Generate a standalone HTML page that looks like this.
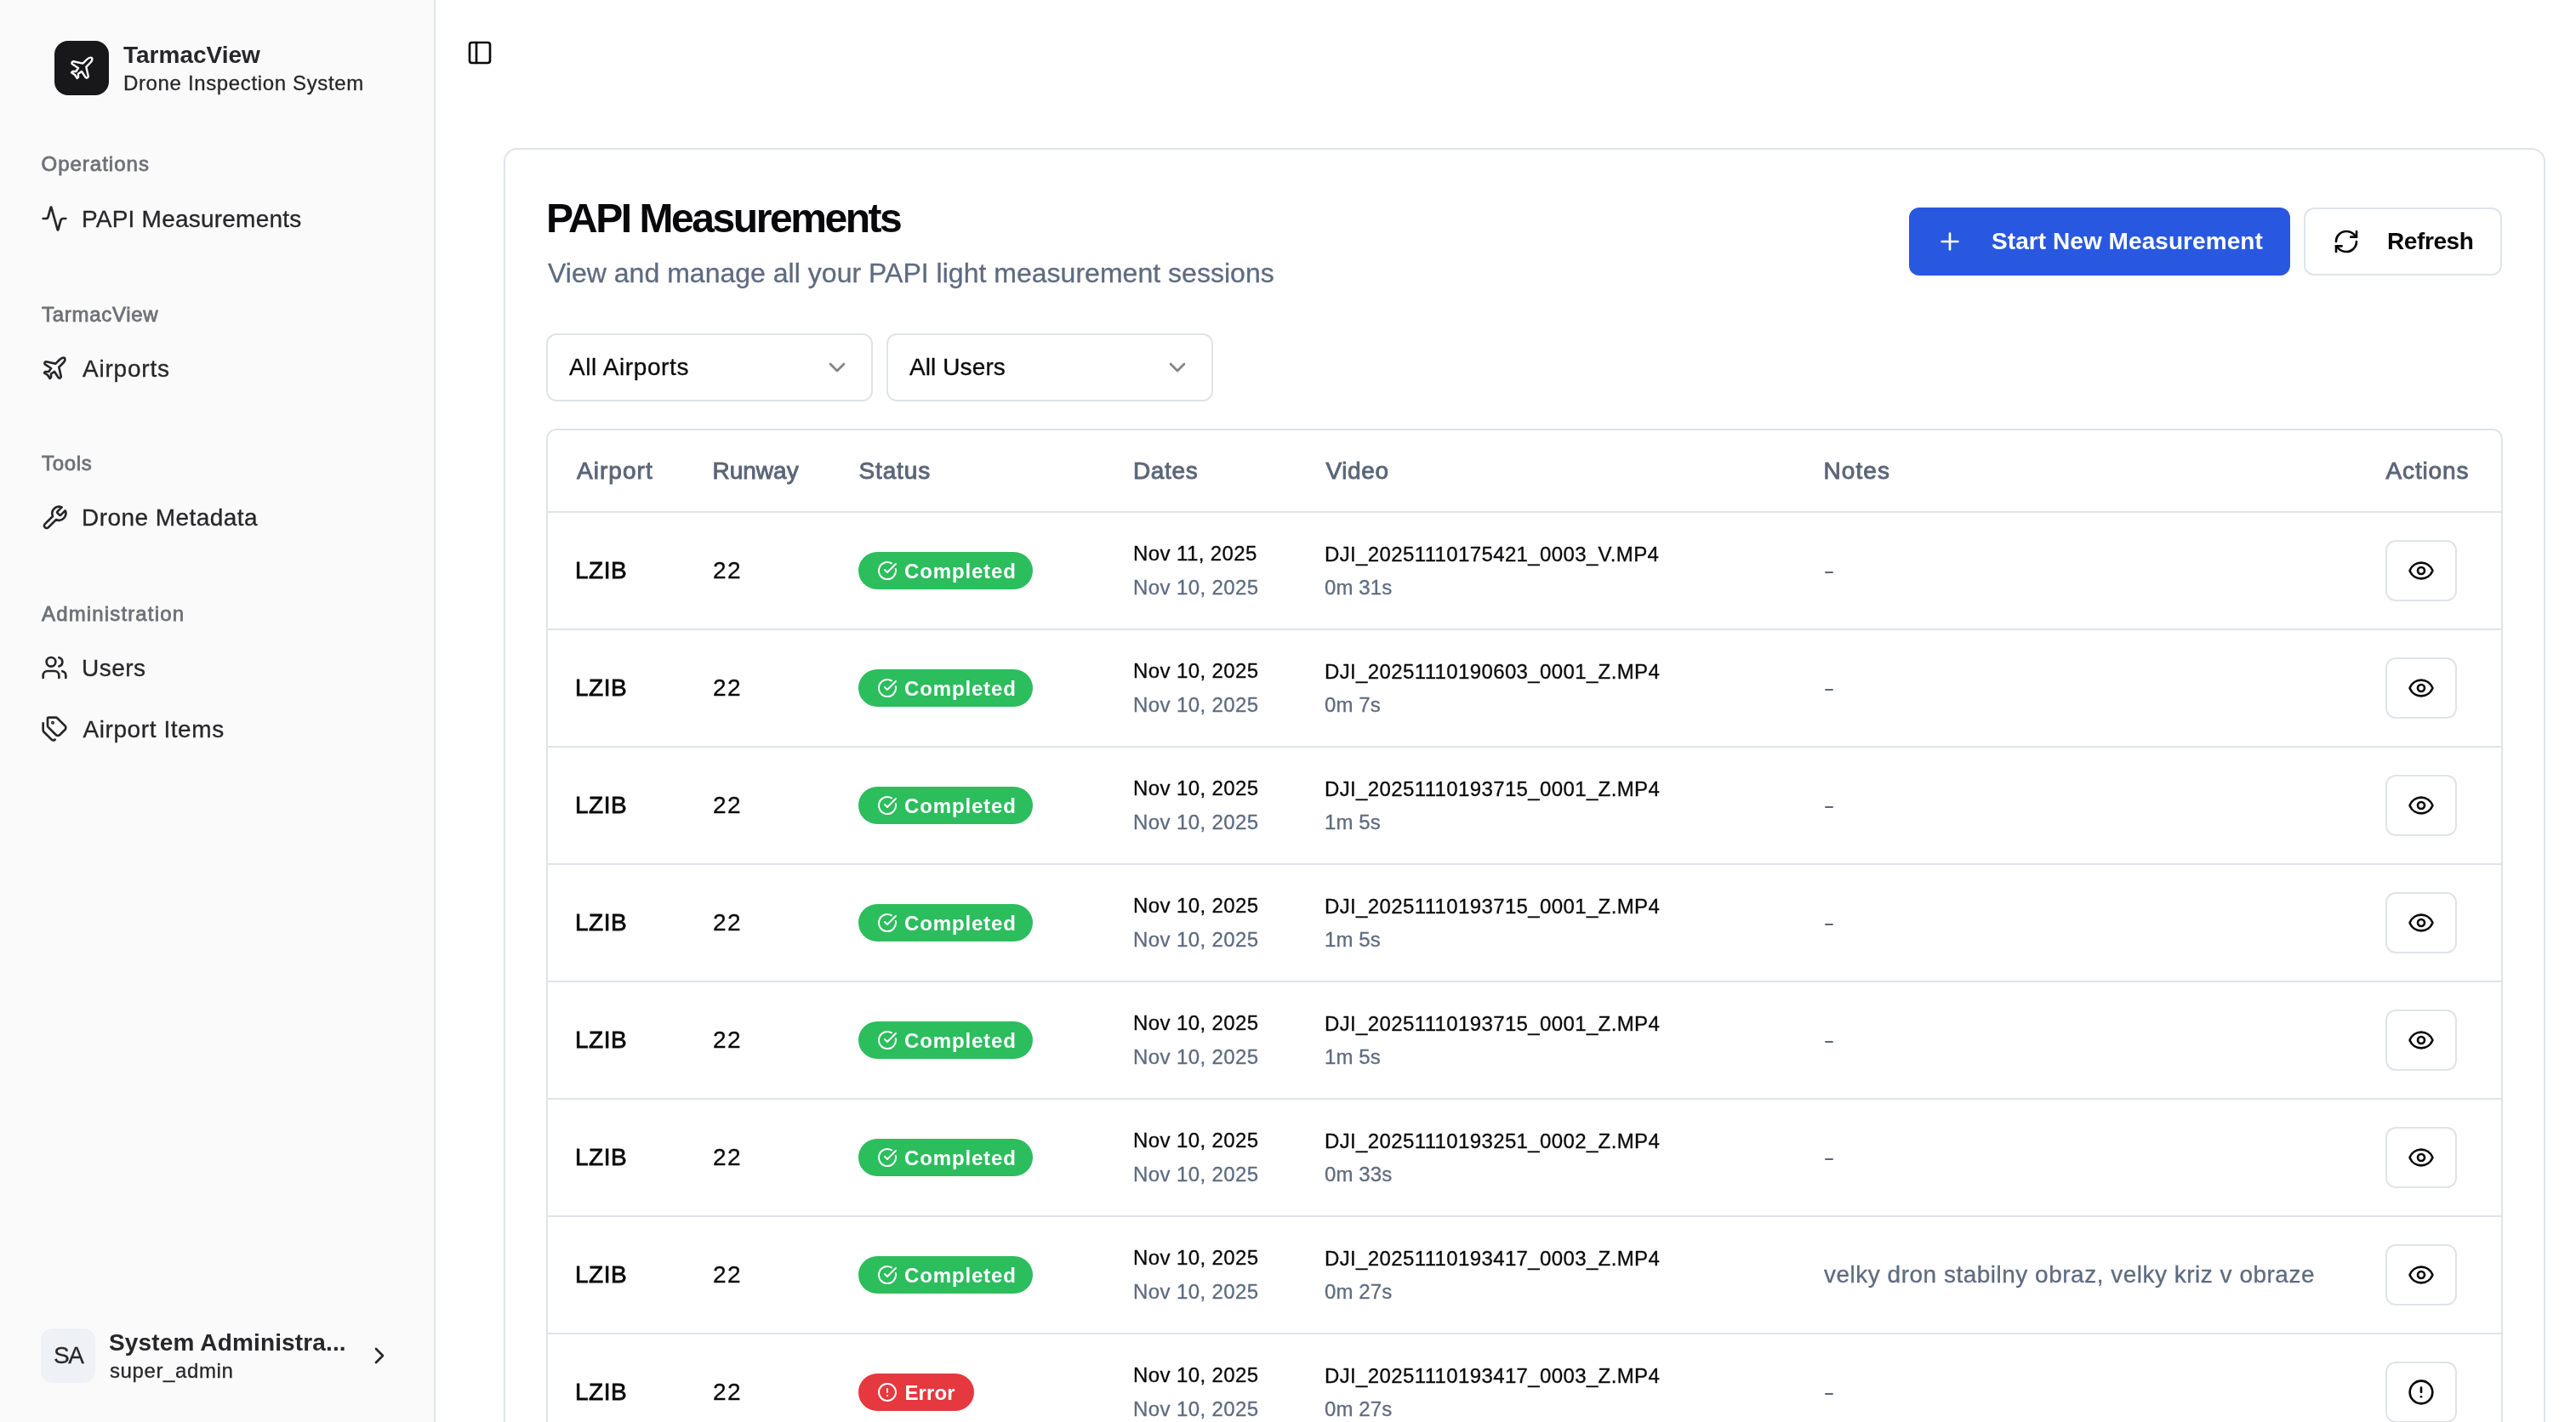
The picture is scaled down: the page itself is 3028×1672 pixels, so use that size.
<!DOCTYPE html>
<html><head><meta charset="utf-8"><title>PAPI Measurements</title>
<style>
html,body{margin:0;padding:0;width:3028px;height:1672px;overflow:hidden;background:#fff;}
body{position:relative;font-family:"Liberation Sans", sans-serif;}
.t{position:absolute;white-space:pre;}
#root{position:absolute;left:0;top:0;width:3028px;height:1672px;will-change:transform;}
svg{display:block;}
@media (max-width:2000px){html{zoom:0.5;}}
</style></head><body><div id="root">
<div style="position:absolute;left:0px;top:0px;width:512px;height:1672px;box-sizing:border-box;background:#fafafa;border-right:2px solid #e0e3e9;"></div>
<div style="position:absolute;left:64px;top:48px;width:64px;height:64px;box-sizing:border-box;background:#18181b;border-radius:16px;"></div>
<svg style="position:absolute;left:80px;top:64px;" width="32" height="32" viewBox="0 0 24 24" fill="none" stroke="#fafafa" stroke-width="1.8" stroke-linecap="round" stroke-linejoin="round"><path d="M17.8 19.2 16 11l3.5-3.5C21 6 21.5 4 21 3c-1-.5-3 0-4.5 1.5L13 8 4.8 6.2c-.5-.1-.9.1-1.1.5l-.3.5c-.2.5-.1 1 .3 1.3L9 12l-2 3H4l-1 1 3 2 2 3 1-1v-3l3-2 3.5 5.3c.3.4.8.5 1.3.3l.5-.2c.4-.3.6-.7.5-1.2z"/></svg>
<div class="t" style="left:145.0px;top:50.59px;font-size:28px;line-height:28px;font-weight:700;color:#27272a;letter-spacing:0px;">TarmacView</div>
<div class="t" style="left:145.0px;top:85.68px;font-size:24px;line-height:24px;font-weight:400;color:#27272a;letter-spacing:0.64px;-webkit-text-stroke:0.3px #27272a;">Drone Inspection System</div>
<div class="t" style="left:48.5px;top:181.48px;font-size:24px;line-height:24px;font-weight:400;color:#6f7178;letter-spacing:1.0px;-webkit-text-stroke:0.8px #6f7178;">Operations</div>
<svg style="position:absolute;left:48px;top:241px;" width="32" height="32" viewBox="0 0 24 24" fill="none" stroke="#27272a" stroke-width="2" stroke-linecap="round" stroke-linejoin="round"><path d="M22 12h-2.48a2 2 0 0 0-1.93 1.46l-2.35 8.36a.25.25 0 0 1-.48 0L9.24 2.18a.25.25 0 0 0-.48 0l-2.35 8.36A2 2 0 0 1 4.49 12H2"/></svg>
<div class="t" style="left:96.0px;top:243.59px;font-size:28px;line-height:28px;font-weight:400;color:#27272a;letter-spacing:0.22px;-webkit-text-stroke:0.3px #27272a;">PAPI Measurements</div>
<div class="t" style="left:49.0px;top:357.68px;font-size:24px;line-height:24px;font-weight:400;color:#6f7178;letter-spacing:0.7px;-webkit-text-stroke:0.8px #6f7178;">TarmacView</div>
<svg style="position:absolute;left:48px;top:417px;" width="32" height="32" viewBox="0 0 24 24" fill="none" stroke="#27272a" stroke-width="2" stroke-linecap="round" stroke-linejoin="round"><path d="M17.8 19.2 16 11l3.5-3.5C21 6 21.5 4 21 3c-1-.5-3 0-4.5 1.5L13 8 4.8 6.2c-.5-.1-.9.1-1.1.5l-.3.5c-.2.5-.1 1 .3 1.3L9 12l-2 3H4l-1 1 3 2 2 3 1-1v-3l3-2 3.5 5.3c.3.4.8.5 1.3.3l.5-.2c.4-.3.6-.7.5-1.2z"/></svg>
<div class="t" style="left:97.0px;top:419.79px;font-size:28px;line-height:28px;font-weight:400;color:#27272a;letter-spacing:0.8px;-webkit-text-stroke:0.3px #27272a;">Airports</div>
<div class="t" style="left:49.0px;top:533.18px;font-size:24px;line-height:24px;font-weight:400;color:#6f7178;letter-spacing:0.7px;-webkit-text-stroke:0.8px #6f7178;">Tools</div>
<svg style="position:absolute;left:48px;top:593px;" width="32" height="32" viewBox="0 0 24 24" fill="none" stroke="#27272a" stroke-width="2" stroke-linecap="round" stroke-linejoin="round"><path d="M14.7 6.3a1 1 0 0 0 0 1.4l1.6 1.6a1 1 0 0 0 1.4 0l3.77-3.77a6 6 0 0 1-7.94 7.94l-6.91 6.91a2.12 2.12 0 0 1-3-3l6.91-6.91a6 6 0 0 1 7.94-7.94l-3.76 3.76z"/></svg>
<div class="t" style="left:96.0px;top:595.29px;font-size:28px;line-height:28px;font-weight:400;color:#27272a;letter-spacing:0.45px;-webkit-text-stroke:0.3px #27272a;">Drone Metadata</div>
<div class="t" style="left:49.0px;top:709.68px;font-size:24px;line-height:24px;font-weight:400;color:#6f7178;letter-spacing:1.15px;-webkit-text-stroke:0.8px #6f7178;">Administration</div>
<svg style="position:absolute;left:48px;top:769px;" width="32" height="32" viewBox="0 0 24 24" fill="none" stroke="#27272a" stroke-width="2" stroke-linecap="round" stroke-linejoin="round"><path d="M16 21v-2a4 4 0 0 0-4-4H6a4 4 0 0 0-4 4v2"/><circle cx="9" cy="7" r="4"/><path d="M22 21v-2a4 4 0 0 0-3-3.87"/><path d="M16 3.13a4 4 0 0 1 0 7.75"/></svg>
<div class="t" style="left:96.0px;top:771.79px;font-size:28px;line-height:28px;font-weight:400;color:#27272a;letter-spacing:0.5px;-webkit-text-stroke:0.3px #27272a;">Users</div>
<svg style="position:absolute;left:48px;top:841px;" width="32" height="32" viewBox="0 0 24 24" fill="none" stroke="#27272a" stroke-width="2" stroke-linecap="round" stroke-linejoin="round"><path d="M13.172 2a2 2 0 0 1 1.414.586l6.71 6.71a2.4 2.4 0 0 1 0 3.408l-4.592 4.592a2.4 2.4 0 0 1-3.408 0l-6.71-6.71A2 2 0 0 1 6 9.172V3a1 1 0 0 1 1-1z"/><path d="M2 7v6.172a2 2 0 0 0 .586 1.414l6.71 6.71a2.4 2.4 0 0 0 3.191.193"/><circle cx="10.5" cy="6.5" r=".5" fill="currentColor"/></svg>
<div class="t" style="left:97.5px;top:843.79px;font-size:28px;line-height:28px;font-weight:400;color:#27272a;letter-spacing:0.58px;-webkit-text-stroke:0.3px #27272a;">Airport Items</div>
<div style="position:absolute;left:48px;top:1562px;width:64px;height:64px;box-sizing:border-box;background:#eef1f5;border-radius:14px;"></div>
<div class="t" style="left:63.0px;top:1580.29px;font-size:28px;line-height:28px;font-weight:400;color:#27272a;letter-spacing:-1.5px;-webkit-text-stroke:0.3px #27272a;">SA</div>
<div class="t" style="left:128.0px;top:1565.49px;font-size:28px;line-height:28px;font-weight:700;color:#27272a;letter-spacing:0.14px;">System Administra...</div>
<div class="t" style="left:129.0px;top:1600.48px;font-size:24px;line-height:24px;font-weight:400;color:#27272a;letter-spacing:0.6px;-webkit-text-stroke:0.3px #27272a;">super_admin</div>
<svg style="position:absolute;left:430px;top:1578px;" width="32" height="32" viewBox="0 0 24 24" fill="none" stroke="#27272a" stroke-width="2" stroke-linecap="round" stroke-linejoin="round"><path d="m9 18 6-6-6-6"/></svg>
<svg style="position:absolute;left:548px;top:46px;" width="32" height="32" viewBox="0 0 24 24" fill="none" stroke="#09090b" stroke-width="2" stroke-linecap="round" stroke-linejoin="round"><rect width="18" height="18" x="3" y="3" rx="2"/><path d="M9 3v18"/></svg>
<div style="position:absolute;left:592px;top:174px;width:2400px;height:1600px;box-sizing:border-box;background:#fff;border:2px solid #e0e3e9;border-radius:16px;box-shadow:0 2px 4px rgba(0,0,0,.04);"></div>
<div class="t" style="left:642.0px;top:233.36px;font-size:48px;line-height:48px;font-weight:700;color:#09090b;letter-spacing:-2.45px;">PAPI Measurements</div>
<div class="t" style="left:644.0px;top:304.91px;font-size:32px;line-height:32px;font-weight:400;color:#5e6b80;letter-spacing:0.02px;-webkit-text-stroke:0.3px #5e6b80;">View and manage all your PAPI light measurement sessions</div>
<div style="position:absolute;left:2244px;top:244px;width:448px;height:80px;box-sizing:border-box;background:#2958e0;border-radius:12px;"></div>
<svg style="position:absolute;left:2276px;top:268px;" width="32" height="32" viewBox="0 0 24 24" fill="none" stroke="#fff" stroke-width="2" stroke-linecap="round" stroke-linejoin="round"><path d="M5 12h14"/><path d="M12 5v14"/></svg>
<div class="t" style="left:2341.0px;top:270.09px;font-size:28px;line-height:28px;font-weight:700;color:#fff;letter-spacing:0.07px;">Start New Measurement</div>
<div style="position:absolute;left:2708px;top:244px;width:233px;height:80px;box-sizing:border-box;background:#fff;border:2px solid #e0e3e9;border-radius:12px;"></div>
<svg style="position:absolute;left:2742px;top:268px;" width="32" height="32" viewBox="0 0 24 24" fill="none" stroke="#09090b" stroke-width="2" stroke-linecap="round" stroke-linejoin="round"><path d="M3 12a9 9 0 0 1 9-9 9.75 9.75 0 0 1 6.74 2.74L21 8"/><path d="M21 3v5h-5"/><path d="M21 12a9 9 0 0 1-9 9 9.75 9.75 0 0 1-6.74-2.74L3 16"/><path d="M8 16H3v5"/></svg>
<div class="t" style="left:2806.0px;top:270.09px;font-size:28px;line-height:28px;font-weight:700;color:#09090b;letter-spacing:-0.4px;">Refresh</div>
<div style="position:absolute;left:642px;top:392px;width:384px;height:80px;box-sizing:border-box;background:#fff;border:2px solid #e0e3e9;border-radius:12px;"></div>
<div class="t" style="left:669.0px;top:418.29px;font-size:28px;line-height:28px;font-weight:400;color:#09090b;letter-spacing:0.6px;-webkit-text-stroke:0.3px #09090b;">All Airports</div>
<svg style="position:absolute;left:968px;top:416px;opacity:.5;" width="32" height="32" viewBox="0 0 24 24" fill="none" stroke="#09090b" stroke-width="2" stroke-linecap="round" stroke-linejoin="round"><path d="m6 9 6 6 6-6"/></svg>
<div style="position:absolute;left:1042px;top:392px;width:384px;height:80px;box-sizing:border-box;background:#fff;border:2px solid #e0e3e9;border-radius:12px;"></div>
<div class="t" style="left:1069.0px;top:418.29px;font-size:28px;line-height:28px;font-weight:400;color:#09090b;letter-spacing:0.1px;-webkit-text-stroke:0.3px #09090b;">All Users</div>
<svg style="position:absolute;left:1368px;top:416px;opacity:.5;" width="32" height="32" viewBox="0 0 24 24" fill="none" stroke="#09090b" stroke-width="2" stroke-linecap="round" stroke-linejoin="round"><path d="m6 9 6 6 6-6"/></svg>
<div style="position:absolute;left:642px;top:504px;width:2300px;height:1300px;box-sizing:border-box;border:2px solid #e0e3e9;border-radius:12px;"></div>
<div style="position:absolute;left:644px;top:601px;width:2296px;height:2px;box-sizing:border-box;background:#e0e3e9;"></div>
<div class="t" style="left:678.0px;top:540.29px;font-size:28px;line-height:28px;font-weight:400;color:#5b6678;letter-spacing:1.05px;-webkit-text-stroke:0.9px #5b6678;">Airport</div>
<div class="t" style="left:837.5px;top:540.29px;font-size:28px;line-height:28px;font-weight:400;color:#5b6678;letter-spacing:0px;-webkit-text-stroke:0.9px #5b6678;">Runway</div>
<div class="t" style="left:1009.5px;top:540.29px;font-size:28px;line-height:28px;font-weight:400;color:#5b6678;letter-spacing:0.85px;-webkit-text-stroke:0.9px #5b6678;">Status</div>
<div class="t" style="left:1332.0px;top:540.29px;font-size:28px;line-height:28px;font-weight:400;color:#5b6678;letter-spacing:0.65px;-webkit-text-stroke:0.9px #5b6678;">Dates</div>
<div class="t" style="left:1558.5px;top:540.29px;font-size:28px;line-height:28px;font-weight:400;color:#5b6678;letter-spacing:0.6px;-webkit-text-stroke:0.9px #5b6678;">Video</div>
<div class="t" style="left:2143.5px;top:540.29px;font-size:28px;line-height:28px;font-weight:400;color:#5b6678;letter-spacing:1.1px;-webkit-text-stroke:0.9px #5b6678;">Notes</div>
<div class="t" style="left:2804.5px;top:540.29px;font-size:28px;line-height:28px;font-weight:400;color:#5b6678;letter-spacing:0.85px;-webkit-text-stroke:0.9px #5b6678;">Actions</div>
<div style="position:absolute;left:644px;top:739px;width:2296px;height:2px;box-sizing:border-box;background:#e0e3e9;"></div>
<div class="t" style="left:676.0px;top:657.49px;font-size:28px;line-height:28px;font-weight:400;color:#09090b;letter-spacing:0.5px;-webkit-text-stroke:0.8px #09090b;">LZIB</div>
<div class="t" style="left:838.0px;top:657.49px;font-size:28px;line-height:28px;font-weight:400;color:#09090b;letter-spacing:1.5px;-webkit-text-stroke:0.3px #09090b;">22</div>
<div style="position:absolute;left:1009px;top:649px;width:205px;height:44px;box-sizing:border-box;background:#2cbd5d;border-radius:22px;"></div>
<svg style="position:absolute;left:1031px;top:659px;" width="24" height="24" viewBox="0 0 24 24" fill="none" stroke="#fff" stroke-width="2" stroke-linecap="round" stroke-linejoin="round"><path d="M21.801 10A10 10 0 1 1 17 3.335"/><path d="m9 11 3 3L22 4"/></svg>
<div class="t" style="left:1063.0px;top:659.88px;font-size:24px;line-height:24px;font-weight:700;color:#fff;letter-spacing:0.85px;">Completed</div>
<div class="t" style="left:1332.0px;top:639.08px;font-size:24px;line-height:24px;font-weight:400;color:#09090b;letter-spacing:0.4px;-webkit-text-stroke:0.3px #09090b;">Nov 11, 2025</div>
<div class="t" style="left:1332.0px;top:679.18px;font-size:24px;line-height:24px;font-weight:400;color:#5e6b80;letter-spacing:0.4px;-webkit-text-stroke:0.3px #5e6b80;">Nov 10, 2025</div>
<div class="t" style="left:1557.0px;top:639.68px;font-size:24px;line-height:24px;font-weight:400;color:#09090b;letter-spacing:0.37px;-webkit-text-stroke:0.3px #09090b;">DJI_20251110175421_0003_V.MP4</div>
<div class="t" style="left:1557.0px;top:678.98px;font-size:24px;line-height:24px;font-weight:400;color:#5e6b80;letter-spacing:0.1px;-webkit-text-stroke:0.3px #5e6b80;">0m 31s</div>
<div style="position:absolute;left:2145px;top:672px;width:10px;height:2px;box-sizing:border-box;background:#5a667a;border-radius:1px;"></div>
<div style="position:absolute;left:2804px;top:635px;width:84px;height:72px;box-sizing:border-box;background:#fff;border:2px solid #e0e3e9;border-radius:12px;"></div>
<svg style="position:absolute;left:2830px;top:655px;" width="32" height="32" viewBox="0 0 24 24" fill="none" stroke="#09090b" stroke-width="2" stroke-linecap="round" stroke-linejoin="round"><path d="M2.062 12.348a1 1 0 0 1 0-.696 10.75 10.75 0 0 1 19.876 0 1 1 0 0 1 0 .696 10.75 10.75 0 0 1-19.876 0"/><circle cx="12" cy="12" r="3"/></svg>
<div style="position:absolute;left:644px;top:877px;width:2296px;height:2px;box-sizing:border-box;background:#e0e3e9;"></div>
<div class="t" style="left:676.0px;top:795.49px;font-size:28px;line-height:28px;font-weight:400;color:#09090b;letter-spacing:0.5px;-webkit-text-stroke:0.8px #09090b;">LZIB</div>
<div class="t" style="left:838.0px;top:795.49px;font-size:28px;line-height:28px;font-weight:400;color:#09090b;letter-spacing:1.5px;-webkit-text-stroke:0.3px #09090b;">22</div>
<div style="position:absolute;left:1009px;top:787px;width:205px;height:44px;box-sizing:border-box;background:#2cbd5d;border-radius:22px;"></div>
<svg style="position:absolute;left:1031px;top:797px;" width="24" height="24" viewBox="0 0 24 24" fill="none" stroke="#fff" stroke-width="2" stroke-linecap="round" stroke-linejoin="round"><path d="M21.801 10A10 10 0 1 1 17 3.335"/><path d="m9 11 3 3L22 4"/></svg>
<div class="t" style="left:1063.0px;top:797.88px;font-size:24px;line-height:24px;font-weight:700;color:#fff;letter-spacing:0.85px;">Completed</div>
<div class="t" style="left:1332.0px;top:777.08px;font-size:24px;line-height:24px;font-weight:400;color:#09090b;letter-spacing:0.4px;-webkit-text-stroke:0.3px #09090b;">Nov 10, 2025</div>
<div class="t" style="left:1332.0px;top:817.18px;font-size:24px;line-height:24px;font-weight:400;color:#5e6b80;letter-spacing:0.4px;-webkit-text-stroke:0.3px #5e6b80;">Nov 10, 2025</div>
<div class="t" style="left:1557.0px;top:777.68px;font-size:24px;line-height:24px;font-weight:400;color:#09090b;letter-spacing:0.37px;-webkit-text-stroke:0.3px #09090b;">DJI_20251110190603_0001_Z.MP4</div>
<div class="t" style="left:1557.0px;top:816.98px;font-size:24px;line-height:24px;font-weight:400;color:#5e6b80;letter-spacing:0.1px;-webkit-text-stroke:0.3px #5e6b80;">0m 7s</div>
<div style="position:absolute;left:2145px;top:810px;width:10px;height:2px;box-sizing:border-box;background:#5a667a;border-radius:1px;"></div>
<div style="position:absolute;left:2804px;top:773px;width:84px;height:72px;box-sizing:border-box;background:#fff;border:2px solid #e0e3e9;border-radius:12px;"></div>
<svg style="position:absolute;left:2830px;top:793px;" width="32" height="32" viewBox="0 0 24 24" fill="none" stroke="#09090b" stroke-width="2" stroke-linecap="round" stroke-linejoin="round"><path d="M2.062 12.348a1 1 0 0 1 0-.696 10.75 10.75 0 0 1 19.876 0 1 1 0 0 1 0 .696 10.75 10.75 0 0 1-19.876 0"/><circle cx="12" cy="12" r="3"/></svg>
<div style="position:absolute;left:644px;top:1015px;width:2296px;height:2px;box-sizing:border-box;background:#e0e3e9;"></div>
<div class="t" style="left:676.0px;top:933.49px;font-size:28px;line-height:28px;font-weight:400;color:#09090b;letter-spacing:0.5px;-webkit-text-stroke:0.8px #09090b;">LZIB</div>
<div class="t" style="left:838.0px;top:933.49px;font-size:28px;line-height:28px;font-weight:400;color:#09090b;letter-spacing:1.5px;-webkit-text-stroke:0.3px #09090b;">22</div>
<div style="position:absolute;left:1009px;top:925px;width:205px;height:44px;box-sizing:border-box;background:#2cbd5d;border-radius:22px;"></div>
<svg style="position:absolute;left:1031px;top:935px;" width="24" height="24" viewBox="0 0 24 24" fill="none" stroke="#fff" stroke-width="2" stroke-linecap="round" stroke-linejoin="round"><path d="M21.801 10A10 10 0 1 1 17 3.335"/><path d="m9 11 3 3L22 4"/></svg>
<div class="t" style="left:1063.0px;top:935.88px;font-size:24px;line-height:24px;font-weight:700;color:#fff;letter-spacing:0.85px;">Completed</div>
<div class="t" style="left:1332.0px;top:915.08px;font-size:24px;line-height:24px;font-weight:400;color:#09090b;letter-spacing:0.4px;-webkit-text-stroke:0.3px #09090b;">Nov 10, 2025</div>
<div class="t" style="left:1332.0px;top:955.18px;font-size:24px;line-height:24px;font-weight:400;color:#5e6b80;letter-spacing:0.4px;-webkit-text-stroke:0.3px #5e6b80;">Nov 10, 2025</div>
<div class="t" style="left:1557.0px;top:915.68px;font-size:24px;line-height:24px;font-weight:400;color:#09090b;letter-spacing:0.37px;-webkit-text-stroke:0.3px #09090b;">DJI_20251110193715_0001_Z.MP4</div>
<div class="t" style="left:1557.0px;top:954.98px;font-size:24px;line-height:24px;font-weight:400;color:#5e6b80;letter-spacing:0.1px;-webkit-text-stroke:0.3px #5e6b80;">1m 5s</div>
<div style="position:absolute;left:2145px;top:948px;width:10px;height:2px;box-sizing:border-box;background:#5a667a;border-radius:1px;"></div>
<div style="position:absolute;left:2804px;top:911px;width:84px;height:72px;box-sizing:border-box;background:#fff;border:2px solid #e0e3e9;border-radius:12px;"></div>
<svg style="position:absolute;left:2830px;top:931px;" width="32" height="32" viewBox="0 0 24 24" fill="none" stroke="#09090b" stroke-width="2" stroke-linecap="round" stroke-linejoin="round"><path d="M2.062 12.348a1 1 0 0 1 0-.696 10.75 10.75 0 0 1 19.876 0 1 1 0 0 1 0 .696 10.75 10.75 0 0 1-19.876 0"/><circle cx="12" cy="12" r="3"/></svg>
<div style="position:absolute;left:644px;top:1153px;width:2296px;height:2px;box-sizing:border-box;background:#e0e3e9;"></div>
<div class="t" style="left:676.0px;top:1071.49px;font-size:28px;line-height:28px;font-weight:400;color:#09090b;letter-spacing:0.5px;-webkit-text-stroke:0.8px #09090b;">LZIB</div>
<div class="t" style="left:838.0px;top:1071.49px;font-size:28px;line-height:28px;font-weight:400;color:#09090b;letter-spacing:1.5px;-webkit-text-stroke:0.3px #09090b;">22</div>
<div style="position:absolute;left:1009px;top:1063px;width:205px;height:44px;box-sizing:border-box;background:#2cbd5d;border-radius:22px;"></div>
<svg style="position:absolute;left:1031px;top:1073px;" width="24" height="24" viewBox="0 0 24 24" fill="none" stroke="#fff" stroke-width="2" stroke-linecap="round" stroke-linejoin="round"><path d="M21.801 10A10 10 0 1 1 17 3.335"/><path d="m9 11 3 3L22 4"/></svg>
<div class="t" style="left:1063.0px;top:1073.88px;font-size:24px;line-height:24px;font-weight:700;color:#fff;letter-spacing:0.85px;">Completed</div>
<div class="t" style="left:1332.0px;top:1053.08px;font-size:24px;line-height:24px;font-weight:400;color:#09090b;letter-spacing:0.4px;-webkit-text-stroke:0.3px #09090b;">Nov 10, 2025</div>
<div class="t" style="left:1332.0px;top:1093.18px;font-size:24px;line-height:24px;font-weight:400;color:#5e6b80;letter-spacing:0.4px;-webkit-text-stroke:0.3px #5e6b80;">Nov 10, 2025</div>
<div class="t" style="left:1557.0px;top:1053.68px;font-size:24px;line-height:24px;font-weight:400;color:#09090b;letter-spacing:0.37px;-webkit-text-stroke:0.3px #09090b;">DJI_20251110193715_0001_Z.MP4</div>
<div class="t" style="left:1557.0px;top:1092.98px;font-size:24px;line-height:24px;font-weight:400;color:#5e6b80;letter-spacing:0.1px;-webkit-text-stroke:0.3px #5e6b80;">1m 5s</div>
<div style="position:absolute;left:2145px;top:1086px;width:10px;height:2px;box-sizing:border-box;background:#5a667a;border-radius:1px;"></div>
<div style="position:absolute;left:2804px;top:1049px;width:84px;height:72px;box-sizing:border-box;background:#fff;border:2px solid #e0e3e9;border-radius:12px;"></div>
<svg style="position:absolute;left:2830px;top:1069px;" width="32" height="32" viewBox="0 0 24 24" fill="none" stroke="#09090b" stroke-width="2" stroke-linecap="round" stroke-linejoin="round"><path d="M2.062 12.348a1 1 0 0 1 0-.696 10.75 10.75 0 0 1 19.876 0 1 1 0 0 1 0 .696 10.75 10.75 0 0 1-19.876 0"/><circle cx="12" cy="12" r="3"/></svg>
<div style="position:absolute;left:644px;top:1291px;width:2296px;height:2px;box-sizing:border-box;background:#e0e3e9;"></div>
<div class="t" style="left:676.0px;top:1209.49px;font-size:28px;line-height:28px;font-weight:400;color:#09090b;letter-spacing:0.5px;-webkit-text-stroke:0.8px #09090b;">LZIB</div>
<div class="t" style="left:838.0px;top:1209.49px;font-size:28px;line-height:28px;font-weight:400;color:#09090b;letter-spacing:1.5px;-webkit-text-stroke:0.3px #09090b;">22</div>
<div style="position:absolute;left:1009px;top:1201px;width:205px;height:44px;box-sizing:border-box;background:#2cbd5d;border-radius:22px;"></div>
<svg style="position:absolute;left:1031px;top:1211px;" width="24" height="24" viewBox="0 0 24 24" fill="none" stroke="#fff" stroke-width="2" stroke-linecap="round" stroke-linejoin="round"><path d="M21.801 10A10 10 0 1 1 17 3.335"/><path d="m9 11 3 3L22 4"/></svg>
<div class="t" style="left:1063.0px;top:1211.88px;font-size:24px;line-height:24px;font-weight:700;color:#fff;letter-spacing:0.85px;">Completed</div>
<div class="t" style="left:1332.0px;top:1191.08px;font-size:24px;line-height:24px;font-weight:400;color:#09090b;letter-spacing:0.4px;-webkit-text-stroke:0.3px #09090b;">Nov 10, 2025</div>
<div class="t" style="left:1332.0px;top:1231.18px;font-size:24px;line-height:24px;font-weight:400;color:#5e6b80;letter-spacing:0.4px;-webkit-text-stroke:0.3px #5e6b80;">Nov 10, 2025</div>
<div class="t" style="left:1557.0px;top:1191.68px;font-size:24px;line-height:24px;font-weight:400;color:#09090b;letter-spacing:0.37px;-webkit-text-stroke:0.3px #09090b;">DJI_20251110193715_0001_Z.MP4</div>
<div class="t" style="left:1557.0px;top:1230.98px;font-size:24px;line-height:24px;font-weight:400;color:#5e6b80;letter-spacing:0.1px;-webkit-text-stroke:0.3px #5e6b80;">1m 5s</div>
<div style="position:absolute;left:2145px;top:1224px;width:10px;height:2px;box-sizing:border-box;background:#5a667a;border-radius:1px;"></div>
<div style="position:absolute;left:2804px;top:1187px;width:84px;height:72px;box-sizing:border-box;background:#fff;border:2px solid #e0e3e9;border-radius:12px;"></div>
<svg style="position:absolute;left:2830px;top:1207px;" width="32" height="32" viewBox="0 0 24 24" fill="none" stroke="#09090b" stroke-width="2" stroke-linecap="round" stroke-linejoin="round"><path d="M2.062 12.348a1 1 0 0 1 0-.696 10.75 10.75 0 0 1 19.876 0 1 1 0 0 1 0 .696 10.75 10.75 0 0 1-19.876 0"/><circle cx="12" cy="12" r="3"/></svg>
<div style="position:absolute;left:644px;top:1429px;width:2296px;height:2px;box-sizing:border-box;background:#e0e3e9;"></div>
<div class="t" style="left:676.0px;top:1347.49px;font-size:28px;line-height:28px;font-weight:400;color:#09090b;letter-spacing:0.5px;-webkit-text-stroke:0.8px #09090b;">LZIB</div>
<div class="t" style="left:838.0px;top:1347.49px;font-size:28px;line-height:28px;font-weight:400;color:#09090b;letter-spacing:1.5px;-webkit-text-stroke:0.3px #09090b;">22</div>
<div style="position:absolute;left:1009px;top:1339px;width:205px;height:44px;box-sizing:border-box;background:#2cbd5d;border-radius:22px;"></div>
<svg style="position:absolute;left:1031px;top:1349px;" width="24" height="24" viewBox="0 0 24 24" fill="none" stroke="#fff" stroke-width="2" stroke-linecap="round" stroke-linejoin="round"><path d="M21.801 10A10 10 0 1 1 17 3.335"/><path d="m9 11 3 3L22 4"/></svg>
<div class="t" style="left:1063.0px;top:1349.88px;font-size:24px;line-height:24px;font-weight:700;color:#fff;letter-spacing:0.85px;">Completed</div>
<div class="t" style="left:1332.0px;top:1329.08px;font-size:24px;line-height:24px;font-weight:400;color:#09090b;letter-spacing:0.4px;-webkit-text-stroke:0.3px #09090b;">Nov 10, 2025</div>
<div class="t" style="left:1332.0px;top:1369.18px;font-size:24px;line-height:24px;font-weight:400;color:#5e6b80;letter-spacing:0.4px;-webkit-text-stroke:0.3px #5e6b80;">Nov 10, 2025</div>
<div class="t" style="left:1557.0px;top:1329.68px;font-size:24px;line-height:24px;font-weight:400;color:#09090b;letter-spacing:0.37px;-webkit-text-stroke:0.3px #09090b;">DJI_20251110193251_0002_Z.MP4</div>
<div class="t" style="left:1557.0px;top:1368.98px;font-size:24px;line-height:24px;font-weight:400;color:#5e6b80;letter-spacing:0.1px;-webkit-text-stroke:0.3px #5e6b80;">0m 33s</div>
<div style="position:absolute;left:2145px;top:1362px;width:10px;height:2px;box-sizing:border-box;background:#5a667a;border-radius:1px;"></div>
<div style="position:absolute;left:2804px;top:1325px;width:84px;height:72px;box-sizing:border-box;background:#fff;border:2px solid #e0e3e9;border-radius:12px;"></div>
<svg style="position:absolute;left:2830px;top:1345px;" width="32" height="32" viewBox="0 0 24 24" fill="none" stroke="#09090b" stroke-width="2" stroke-linecap="round" stroke-linejoin="round"><path d="M2.062 12.348a1 1 0 0 1 0-.696 10.75 10.75 0 0 1 19.876 0 1 1 0 0 1 0 .696 10.75 10.75 0 0 1-19.876 0"/><circle cx="12" cy="12" r="3"/></svg>
<div style="position:absolute;left:644px;top:1567px;width:2296px;height:2px;box-sizing:border-box;background:#e0e3e9;"></div>
<div class="t" style="left:676.0px;top:1485.49px;font-size:28px;line-height:28px;font-weight:400;color:#09090b;letter-spacing:0.5px;-webkit-text-stroke:0.8px #09090b;">LZIB</div>
<div class="t" style="left:838.0px;top:1485.49px;font-size:28px;line-height:28px;font-weight:400;color:#09090b;letter-spacing:1.5px;-webkit-text-stroke:0.3px #09090b;">22</div>
<div style="position:absolute;left:1009px;top:1477px;width:205px;height:44px;box-sizing:border-box;background:#2cbd5d;border-radius:22px;"></div>
<svg style="position:absolute;left:1031px;top:1487px;" width="24" height="24" viewBox="0 0 24 24" fill="none" stroke="#fff" stroke-width="2" stroke-linecap="round" stroke-linejoin="round"><path d="M21.801 10A10 10 0 1 1 17 3.335"/><path d="m9 11 3 3L22 4"/></svg>
<div class="t" style="left:1063.0px;top:1487.88px;font-size:24px;line-height:24px;font-weight:700;color:#fff;letter-spacing:0.85px;">Completed</div>
<div class="t" style="left:1332.0px;top:1467.08px;font-size:24px;line-height:24px;font-weight:400;color:#09090b;letter-spacing:0.4px;-webkit-text-stroke:0.3px #09090b;">Nov 10, 2025</div>
<div class="t" style="left:1332.0px;top:1507.18px;font-size:24px;line-height:24px;font-weight:400;color:#5e6b80;letter-spacing:0.4px;-webkit-text-stroke:0.3px #5e6b80;">Nov 10, 2025</div>
<div class="t" style="left:1557.0px;top:1467.68px;font-size:24px;line-height:24px;font-weight:400;color:#09090b;letter-spacing:0.37px;-webkit-text-stroke:0.3px #09090b;">DJI_20251110193417_0003_Z.MP4</div>
<div class="t" style="left:1557.0px;top:1506.98px;font-size:24px;line-height:24px;font-weight:400;color:#5e6b80;letter-spacing:0.1px;-webkit-text-stroke:0.3px #5e6b80;">0m 27s</div>
<div class="t" style="left:2144.0px;top:1485.29px;font-size:28px;line-height:28px;font-weight:400;color:#5e6b80;letter-spacing:0.5px;-webkit-text-stroke:0.3px #5e6b80;">velky dron stabilny obraz, velky kriz v obraze</div>
<div style="position:absolute;left:2804px;top:1463px;width:84px;height:72px;box-sizing:border-box;background:#fff;border:2px solid #e0e3e9;border-radius:12px;"></div>
<svg style="position:absolute;left:2830px;top:1483px;" width="32" height="32" viewBox="0 0 24 24" fill="none" stroke="#09090b" stroke-width="2" stroke-linecap="round" stroke-linejoin="round"><path d="M2.062 12.348a1 1 0 0 1 0-.696 10.75 10.75 0 0 1 19.876 0 1 1 0 0 1 0 .696 10.75 10.75 0 0 1-19.876 0"/><circle cx="12" cy="12" r="3"/></svg>
<div class="t" style="left:676.0px;top:1623.49px;font-size:28px;line-height:28px;font-weight:400;color:#09090b;letter-spacing:0.5px;-webkit-text-stroke:0.8px #09090b;">LZIB</div>
<div class="t" style="left:838.0px;top:1623.49px;font-size:28px;line-height:28px;font-weight:400;color:#09090b;letter-spacing:1.5px;-webkit-text-stroke:0.3px #09090b;">22</div>
<div style="position:absolute;left:1009px;top:1615px;width:136px;height:44px;box-sizing:border-box;background:#e5383f;border-radius:22px;"></div>
<svg style="position:absolute;left:1031px;top:1625px;" width="24" height="24" viewBox="0 0 24 24" fill="none" stroke="#fff" stroke-width="2" stroke-linecap="round" stroke-linejoin="round"><circle cx="12" cy="12" r="10"/><line x1="12" x2="12" y1="8" y2="12"/><line x1="12" x2="12.01" y1="16" y2="16"/></svg>
<div class="t" style="left:1063.5px;top:1625.88px;font-size:24px;line-height:24px;font-weight:700;color:#fff;letter-spacing:0.1px;">Error</div>
<div class="t" style="left:1332.0px;top:1605.08px;font-size:24px;line-height:24px;font-weight:400;color:#09090b;letter-spacing:0.4px;-webkit-text-stroke:0.3px #09090b;">Nov 10, 2025</div>
<div class="t" style="left:1332.0px;top:1645.18px;font-size:24px;line-height:24px;font-weight:400;color:#5e6b80;letter-spacing:0.4px;-webkit-text-stroke:0.3px #5e6b80;">Nov 10, 2025</div>
<div class="t" style="left:1557.0px;top:1605.68px;font-size:24px;line-height:24px;font-weight:400;color:#09090b;letter-spacing:0.37px;-webkit-text-stroke:0.3px #09090b;">DJI_20251110193417_0003_Z.MP4</div>
<div class="t" style="left:1557.0px;top:1644.98px;font-size:24px;line-height:24px;font-weight:400;color:#5e6b80;letter-spacing:0.1px;-webkit-text-stroke:0.3px #5e6b80;">0m 27s</div>
<div style="position:absolute;left:2145px;top:1638px;width:10px;height:2px;box-sizing:border-box;background:#5a667a;border-radius:1px;"></div>
<div style="position:absolute;left:2804px;top:1601px;width:84px;height:72px;box-sizing:border-box;background:#fff;border:2px solid #e0e3e9;border-radius:12px;"></div>
<svg style="position:absolute;left:2830px;top:1621px;" width="32" height="32" viewBox="0 0 24 24" fill="none" stroke="#09090b" stroke-width="2" stroke-linecap="round" stroke-linejoin="round"><circle cx="12" cy="12" r="10"/><line x1="12" x2="12" y1="8" y2="12"/><line x1="12" x2="12.01" y1="16" y2="16"/></svg>
</div></body></html>
